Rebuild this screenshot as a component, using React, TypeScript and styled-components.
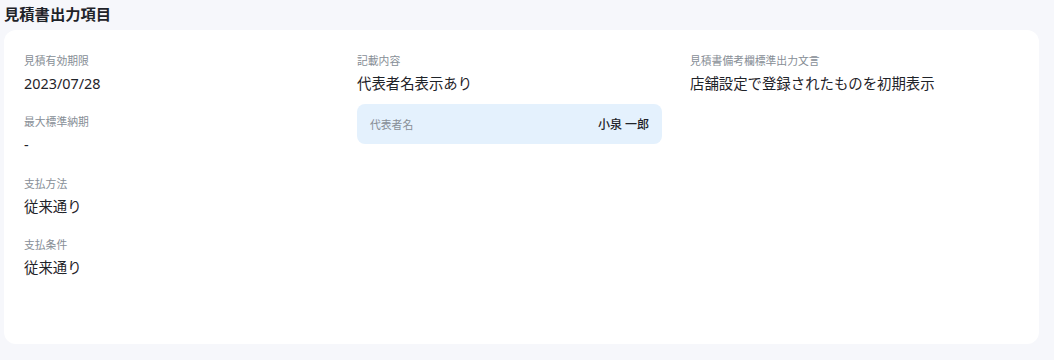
import styled, { createGlobalStyle } from 'styled-components';

const GlobalStyle = createGlobalStyle`
   html, body {
      margin: 0;
      padding: 0;
      background: #f6f7fb;
   }

   body {
      font-family: 'Noto Sans', 'Noto Sans CJK JP', sans-serif;
      color: #1f2329;
   }
`;

type Field = {
   label: string;
   value: string;
};

const leftFields: Field[] = [
   { label: '見積有効期限', value: '2023/07/28' },
   { label: '最大標準納期', value: '-' },
   { label: '支払方法', value: '従来通り' },
   { label: '支払条件', value: '従来通り' },
];

const FieldItem = ({ label, value }: Field) => (
   <StyledField>
      <FieldLabel>{label}</FieldLabel>
      <FieldValue>{value}</FieldValue>
   </StyledField>
);

const App = () => {
   return (
      <Page>
         <GlobalStyle />
         <SectionTitle>見積書出力項目</SectionTitle>
         <Card>
            <Column>
               {leftFields.map((f) => (
                  <FieldItem key={f.label} {...f} />
               ))}
            </Column>
            <Column>
               <FieldItem label="記載内容" value="代表者名表示あり" />
               <InfoBox>
                  <InfoLabel>代表者名</InfoLabel>
                  <InfoValue>小泉 一郎</InfoValue>
               </InfoBox>
            </Column>
            <Column>
               <FieldItem label="見積書備考欄標準出力文言" value="店舗設定で登録されたものを初期表示" />
            </Column>
         </Card>
      </Page>
   );
};

const Page = styled.div`
   width: 1054px;
   height: 360px;
   padding: 2px 15px 0 4px;
   box-sizing: border-box;
`;

const SectionTitle = styled.h2`
   margin: 0;
   height: 28px;
   font-size: 15.3px;
   line-height: 24px;
   font-weight: 700;
   color: #1f2329;
`;

const Card = styled.div`
   display: grid;
   grid-template-columns: 329px 329px 1fr;
   column-gap: 4px;
   height: 314px;
   padding: 23px 20px 0;
   box-sizing: border-box;
   border-radius: 12px;
   background: #ffffff;
`;

const Column = styled.div`
   display: flex;
   flex-direction: column;
   gap: 20px;
   min-width: 0;
`;

const StyledField = styled.div`
   display: flex;
   flex-direction: column;
   gap: 3.6px;
`;

const FieldLabel = styled.div`
   font-size: 10.8px;
   line-height: 16.2px;
   color: #878e96;
`;

const FieldValue = styled.div`
   font-size: 14.4px;
   line-height: 21.6px;
   color: #1f2329;
`;

const InfoBox = styled.div`
   display: flex;
   align-items: center;
   justify-content: space-between;
   width: 305px;
   height: 40px;
   margin-top: -10px;
   padding: 0 13px;
   box-sizing: border-box;
   border-radius: 8px;
   background: #e4f1fd;
`;

const InfoLabel = styled.span`
   font-size: 10.8px;
   color: #878e96;
`;

const InfoValue = styled.span`
   font-size: 12px;
   font-weight: 500;
   color: #1f2329;
`;

export default App;
